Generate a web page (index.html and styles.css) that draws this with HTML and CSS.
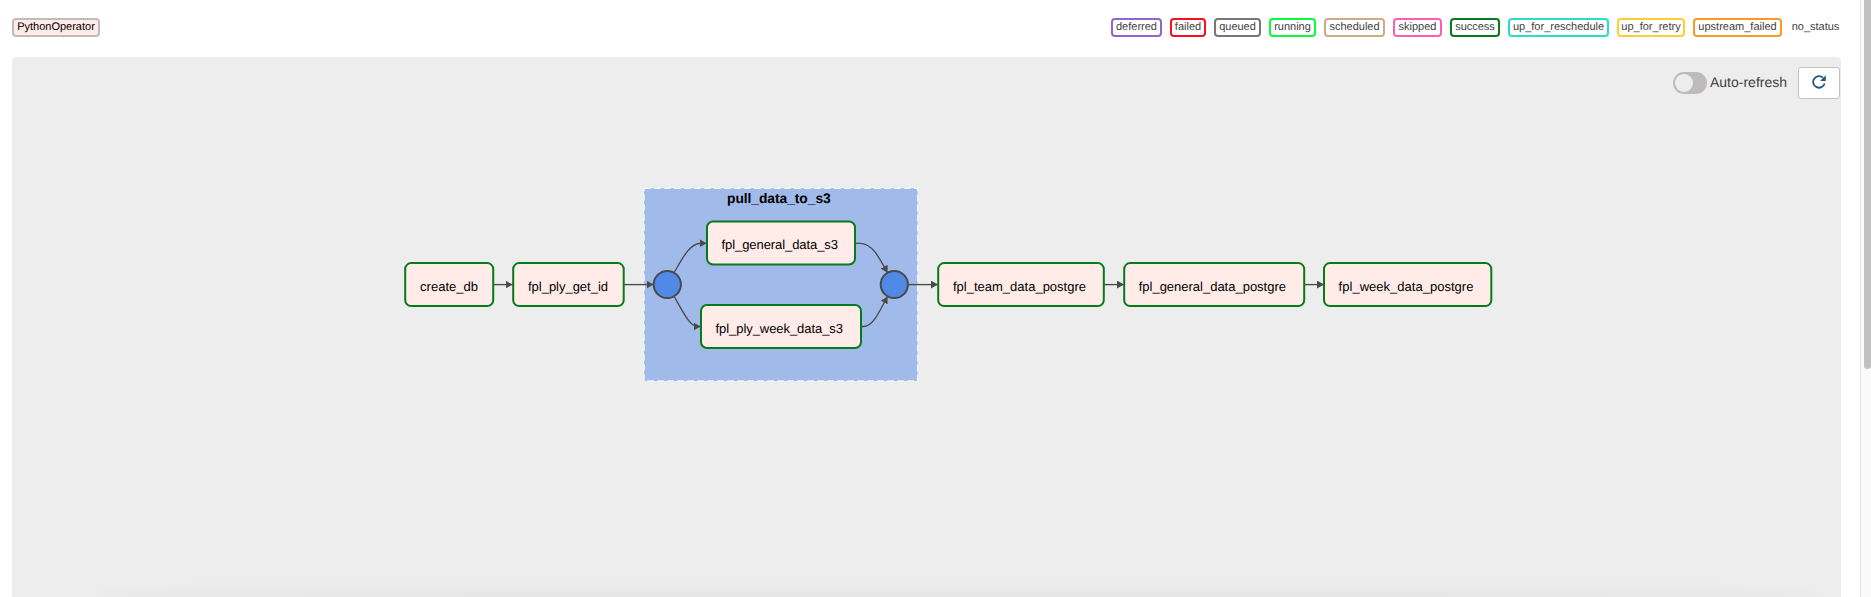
FILE: index.html
```html
<!DOCTYPE html>
<html lang="en">
<head>
<meta charset="utf-8">
<title>Graph</title>
<link rel="stylesheet" href="styles.css">
</head>
<body>
<div class="page">
<main class="content">
  <div class="legend">
    <span class="badge operator">PythonOperator</span>
    <div class="states">
      <span class="badge deferred">deferred</span>
      <span class="badge failed">failed</span>
      <span class="badge queued">queued</span>
      <span class="badge running">running</span>
      <span class="badge scheduled">scheduled</span>
      <span class="badge skipped">skipped</span>
      <span class="badge success">success</span>
      <span class="badge up-for-reschedule">up_for_reschedule</span>
      <span class="badge up-for-retry">up_for_retry</span>
      <span class="badge upstream-failed">upstream_failed</span>
      <span class="badge no-status">no_status</span>
    </div>
  </div>
  <section class="panel">
    <svg class="graph" viewBox="12 57 1829 540" width="1829" height="540">
      <defs>
        <marker id="arrow" viewBox="0 0 7 8" refX="7" refY="4" markerWidth="7" markerHeight="8" markerUnits="userSpaceOnUse" orient="auto"><path class="head" d="M0 0L7 4L0 8z"/></marker>
      </defs>
      <rect class="cluster" x="644.1" y="188.2" width="273.5" height="192.8"/>
      <text class="cluster-label" x="727" y="203" textLength="103.7">pull_data_to_s3</text>
      <g class="edges">
        <path d="M494 284.6H512.5"/>
        <path d="M624 284.6H653.5"/>
        <path d="M674.5 272C683 257 690 243.3 701 243.3H706.5"/>
        <path d="M674.5 297C683 312 690 326.5 697 326.5H700.5"/>
        <path d="M855 243.3H860C872 243.3 879 257 887.5 272.8"/>
        <path d="M861 326.5H864C873 326.5 879 312 887.5 296.4"/>
        <path d="M908 284.6H938"/>
        <path d="M1104 284.6H1124"/>
        <path d="M1304 284.6H1324"/>
      </g>
      <circle class="join" cx="667.3" cy="284.5" r="13.6"/>
      <circle class="join" cx="894.3" cy="284.5" r="13.6"/>
      <g class="tasks">
        <rect x="405.2" y="263.1" width="88" height="43" rx="6"/>
        <rect x="513.2" y="263.1" width="110.5" height="43" rx="6"/>
        <rect x="707" y="221.5" width="148" height="43" rx="6"/>
        <rect x="701" y="305" width="160" height="43" rx="6"/>
        <rect x="938.2" y="263.1" width="165.6" height="43" rx="6"/>
        <rect x="1124.2" y="263.1" width="180" height="43" rx="6"/>
        <rect x="1324" y="263.1" width="167.3" height="43" rx="6"/>
      </g>
      <g class="labels">
        <text x="420" y="290.8" textLength="58">create_db</text>
        <text x="528" y="290.8" textLength="80">fpl_ply_get_id</text>
        <text x="721.5" y="249" textLength="116.5">fpl_general_data_s3</text>
        <text x="715.5" y="332.8" textLength="127.5">fpl_ply_week_data_s3</text>
        <text x="953" y="290.8" textLength="133">fpl_team_data_postgre</text>
        <text x="1138.7" y="290.8" textLength="147.3">fpl_general_data_postgre</text>
        <text x="1338.6" y="290.8" textLength="134.8">fpl_week_data_postgre</text>
      </g>
    </svg>
    <div class="controls">
      <span class="toggle"><span class="knob"></span></span>
      <span class="toggle-label">Auto-refresh</span>
      <button class="refresh" aria-label="Refresh">
        <svg width="14" height="14" viewBox="0 0 14 14"><path class="arc" d="M12.6 8.4A5.8 5.8 0 1 1 11 2.7"/><path class="tip" d="M13.8 0.3V6H8.1z"/></svg>
      </button>
    </div>
    <div class="bottom-shade"></div>
  </section>
</main>
<aside class="scrollbar"><div class="thumb"></div></aside>
</div>
</body>
</html>
```
FILE: styles.css
```css
* { box-sizing: border-box; }
body { margin: 0; background: #fff; color: #3f3f3f; font-family: "Liberation Sans", Arial, sans-serif; overflow: hidden; text-rendering: geometricPrecision; }
.page { display: flex; height: 597px; }
.content { flex: 1; padding: 18px 19px 0 12px; }
.legend { display: flex; justify-content: space-between; height: 39px; align-items: flex-start; }
.states { display: flex; gap: 8px; }
.badge { display: flex; justify-content: center; height: 19px; border: 2px solid; border-radius: 4px; font-size: 11px; line-height: 15px; white-space: nowrap; }
.operator { width: 88px; background: #ffebe8; border-color: #bfbcbc; color: #000; }
.deferred { width: 51px; border-color: #8c66d4; }
.failed { width: 36px; border-color: #fb0d1b; }
.queued { width: 47px; border-color: #767676; }
.running { width: 47px; border-color: #0bfb3c; }
.scheduled { width: 61px; border-color: #cfac83; }
.skipped { width: 49px; border-color: #fb60ae; }
.success { width: 50px; border-color: #077a1b; }
.up-for-reschedule { width: 101px; border-color: #2bdccb; }
.up-for-retry { width: 68px; border-color: #fdcf34; }
.upstream-failed { width: 89px; border-color: #fd9827; }
.no-status { width: 51px; border-color: transparent; }
.panel { position: relative; height: 540px; background: #ededed; border-radius: 4px 4px 0 0; overflow: hidden; }
.graph { display: block; }
.cluster { fill: #a0bae9; stroke: #f1f4fa; stroke-width: 1.4; stroke-dasharray: 6.6 3.4; }
.cluster-label { font-size: 13.8px; font-weight: bold; fill: #000; }
.edges path { fill: none; stroke: #4a4a4a; stroke-width: 1.35; marker-end: url(#arrow); }
.edges path, .head { stroke-linejoin: round; }
.edges path { pointer-events: none; }
.head { fill: #4a4a4a; }
.join { fill: #518ae6; stroke: #4a4a4a; stroke-width: 2; }
.tasks rect { fill: #ffebe8; stroke: #077a1b; stroke-width: 2; }
.labels text { font-size: 13px; fill: #000; }
.controls { position: absolute; top: 10px; right: 1px; display: flex; align-items: center; height: 32px; }
.toggle { display: flex; align-items: center; width: 34px; height: 22px; border-radius: 11px; padding-left: 2px; background: #bfbbbb; margin-right: 3px; }
.knob { width: 18px; height: 18px; border-radius: 50%; background: #ededed; }
.toggle-label { width: 77px; font-size: 14px; line-height: 20px; margin: -2px 11px 0 0; white-space: nowrap; }
.refresh { display: flex; align-items: center; justify-content: center; width: 42px; height: 32px; padding: 0 0 2px; background: #fff; border: 1px solid #c4c1c1; border-radius: 3px; }
.arc { fill: none; stroke: #26557f; stroke-width: 1.8; }
.tip { fill: #26557f; }
.bottom-shade { position: absolute; left: 90px; right: 30px; bottom: -10px; height: 4px; box-shadow: 0 0 22px 8px rgba(0,0,0,.06); border-radius: 50%; }
.scrollbar { width: 11px; background: #fafafa; border-left: 1px solid #e2e2e2; padding-left: 3px; }
.thumb { height: 369px; background: #c1c1c1; border-radius: 0 0 4px 4px; }
```
